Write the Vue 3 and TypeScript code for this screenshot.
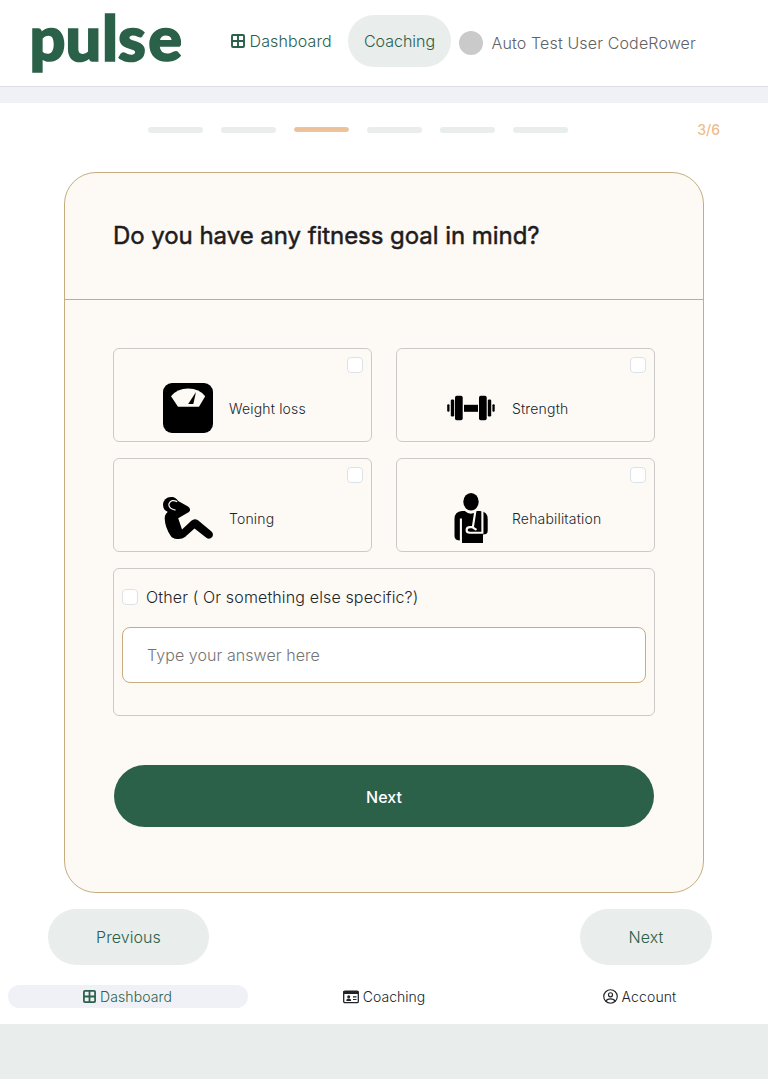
<script setup lang="ts">
import { ref } from 'vue'

type Goal = { id: string; label: string }

const goals: Goal[] = [
  { id: 'weight', label: 'Weight loss' },
  { id: 'strength', label: 'Strength' },
  { id: 'toning', label: 'Toning' },
  { id: 'rehab', label: 'Rehabilitation' },
]
const totalSteps = 6
const step = 3
const selected = ref<string[]>([])
const answer = ref('')
</script>

<template>
  <div class="page">
    <header class="header">
      <svg class="logo" width="152" height="64" viewBox="0 0 152 64">
        <text class="wordmark" y="48" x="-2.4 33.5 70 86 116.3">pulse</text>
      </svg>
      <nav class="topnav">
        <a class="toplink dash">
          <svg class="grid-icon" viewBox="0 0 14 14"><rect x="1" y="1" width="12" height="12" rx="1" /><path d="M7 1v12M1 7h12" /></svg>
          <span>Dashboard</span>
        </a>
        <a class="toplink pill">Coaching</a>
      </nav>
      <div class="user"><span class="avatar"></span><span class="username">Auto Test User CodeRower</span></div>
    </header>
    <div class="band"></div>

    <div class="progress">
      <div class="steps">
        <span v-for="n in totalSteps" :key="n" class="step" :class="{ active: n === step }"></span>
      </div>
      <span class="count">{{ step }}/{{ totalSteps }}</span>
    </div>

    <main class="card">
      <div class="card-head"><h1>Do you have any fitness goal in mind?</h1></div>
      <div class="card-body">
        <div class="goals">
          <label v-for="g in goals" :key="g.id" class="goal">
            <input v-model="selected" type="checkbox" class="check corner" :value="g.id" />
            <svg v-if="g.id === 'weight'" class="art" viewBox="0 0 50 50">
              <rect width="50" height="50" rx="9" />
              <path class="cut" d="M8 13.3Q14 5.5 25.2 5.5T42.2 13.3L36 23.7H15Z" />
              <path d="M33 9L30.3 21H25.2Z" />
            </svg>
            <svg v-else-if="g.id === 'strength'" class="art" viewBox="0 0 50 50">
              <rect x="1.2" y="21.3" width="2.3" height="7.4" rx="1" /><rect x="4.8" y="16.5" width="3.4" height="17" rx="1.2" />
              <rect x="9" y="12.8" width="7.7" height="24.4" rx="1.7" /><rect x="18" y="21.8" width="14" height="7" />
              <rect x="33" y="12.8" width="7.7" height="24.4" rx="1.7" /><rect x="41.8" y="16.5" width="3.4" height="17" rx="1.2" />
              <rect x="46.4" y="21.3" width="2.3" height="7.4" rx="1" />
            </svg>
            <svg v-else-if="g.id === 'toning'" class="art" viewBox="0 0 50 50">
              <circle cx="7.8" cy="11.8" r="7.8" />
              <path d="M8 4Q12 3.7 15.2 8L25 13.5Q28.5 16.2 26 19L15.2 25.2L19 36.5L28.3 27.8Q31.5 24.8 35 27.3L48.5 38.6Q51 41 49.2 44Q46.5 47.2 43.3 44.8L31.5 35.4L22 44Q19 46.5 14 46Q9.5 45.7 7.8 43Q2 34.5 1.7 25.5Q1.5 20.5 7 17.5Z" />
              <path class="line thin" d="M14.2 8.6Q8 5.7 6 10.7Q5 15.5 12.5 17.2" />
            </svg>
            <svg v-else class="art" viewBox="0 0 50 50">
              <ellipse cx="25" cy="8.8" rx="7.7" ry="8.8" />
              <path d="M16 18H18.8Q24.8 23.3 31.2 18H34Q41.7 18.5 41.7 26V38Q41.7 41.5 37 41.5V50H16V47.5Q8.5 48 8.5 43V26Q8.5 18.5 16 18Z" />
              <path class="line" d="M14.9 25.5V50M29.3 18.5L26.8 34.5M36.4 18V39.8H24Q20.6 39.8 20.6 37Q20.6 34.3 24 34.1H26.2L30.5 36.9" />
            </svg>
            <span class="goal-label">{{ g.label }}</span>
          </label>
        </div>
        <div class="other">
          <label class="other-row">
            <input v-model="selected" type="checkbox" class="check" value="other" />
            <span class="other-text">Other ( Or something else specific?)</span>
          </label>
          <input v-model="answer" class="answer" type="text" placeholder="Type your answer here" />
        </div>
        <button class="submit">Next</button>
      </div>
    </main>

    <div class="pager">
      <button class="soft prev">Previous</button>
      <button class="soft next">Next</button>
    </div>

    <nav class="bottomnav">
      <a class="tab on">
        <svg class="grid-icon" viewBox="0 0 14 14"><rect x="1" y="1" width="12" height="12" rx="1" /><path d="M7 1v12M1 7h12" /></svg>
        <span>Dashboard</span>
      </a>
      <a class="tab">
        <svg class="id-icon" viewBox="0 0 16 14">
          <rect x=".7" y="1.2" width="14.6" height="11.4" rx="1.2" fill="none" stroke="currentColor" stroke-width="1.3" />
          <path d="M.5 1h15v3H.5zM3.2 11Q3.2 8.6 5.7 8.6T8.2 11Z" /><circle cx="5.7" cy="6.8" r="1.5" />
          <path d="M10 6.3h3.5v1.1H10zM10 9h3.5v1.1H10z" />
        </svg>
        <span>Coaching</span>
      </a>
      <a class="tab">
        <svg class="user-icon" viewBox="0 0 14 14"><circle cx="7" cy="7" r="6.3" /><circle cx="7" cy="5.4" r="1.9" /><path d="M2.8 11.5Q3.5 9.2 7 9.2T11.2 11.5" /></svg>
        <span>Account</span>
      </a>
    </nav>
    <footer class="foot"></footer>
  </div>
</template>

<style>
body { margin: 0; background: #fff; }
</style>

<style scoped>
* { box-sizing: border-box; }
.page { width: 768px; height: 1079px; display: flex; flex-direction: column; font-family: Inter, "Liberation Sans", sans-serif; font-weight: 300; font-size: 16px; line-height: 24px; color: #212529; background: #fff; overflow: hidden; }
.header { flex: none; height: 87px; border-bottom: 1px solid #dcdfe6; display: flex; align-items: flex-start; padding-left: 32px; }
.logo { margin-top: 13px; overflow: visible; flex: none; }
.wordmark { font-family: Lato, sans-serif; font-weight: 900; font-size: 63px; fill: #2b6049; stroke: #2b6049; stroke-width: 1.7px; }
.topnav { display: flex; margin: 15px 0 0 47px; }
.toplink { color: #2b6049; height: 52px; display: flex; align-items: center; white-space: nowrap; }
.dash { width: 117px; gap: 4.5px; letter-spacing: .12px; }
.pill { width: 103px; justify-content: center; border-radius: 26px; background: #e9edeb; }
.grid-icon { width: 14px; height: 14px; flex: none; fill: none; stroke: currentColor; stroke-width: 1.9; }
.user { display: flex; align-items: center; gap: 8.5px; margin: 31px 0 0 8px; height: 24px; white-space: nowrap; }
.avatar { width: 24px; height: 24px; border-radius: 50%; background: #cacaca; }
.username { color: #626262; letter-spacing: .14px; }
.band { flex: none; height: 16px; background: #f0f1f6; }
.progress { flex: none; height: 69px; display: flex; padding: 16px 48px 0 148px; justify-content: space-between; }
.steps { display: flex; gap: 18px; padding-top: 8px; }
.step { width: 55px; height: 6px; border-radius: 3px; background: #e9edeb; }
.step.active { height: 5px; background: #edc298; border: 1px solid #e4c7a8; }
.count { color: #edbd8f; font-size: 14px; font-weight: 500; line-height: 22px; }
.card { flex: none; width: 640px; height: 721px; margin: 0 64px; border: 1px solid #c5ad80; border-radius: 32px; background: #fdfaf6; }
.card-head { height: 127px; border-bottom: 1px solid #c5ad80; padding: 47px 48px 0; }
h1 { margin: 0; font-size: 24px; line-height: 32px; font-weight: 400; letter-spacing: -.05px; -webkit-text-stroke: .5px #1f1c1c; color: #1f1c1c; white-space: nowrap; }
.card-body { padding: 48px; }
.goals { display: grid; grid-template-columns: 1fr 1fr; gap: 16px 24px; }
.goal { height: 94px; border: 1px solid #cccac8; border-radius: 6px; position: relative; display: flex; align-items: flex-start; padding: 34px 0 0 49px; gap: 16px; }
.art { width: 50px; height: 50px; flex: none; fill: #000; }
.cut { fill: #fdfaf6; }
.line { fill: none; stroke: #fdfaf6; stroke-width: 2.1; }
.thin { stroke-width: 1.2; }
.goal-label { font-size: 14px; line-height: 20px; margin-top: 16px; white-space: nowrap; letter-spacing: .17px; }
.check { appearance: none; width: 16px; height: 16px; margin: 0; border: 1px solid #dde1e8; border-radius: 4px; background: #fff; flex: none; }
.corner { position: absolute; right: 8px; top: 8px; }
.other { height: 148px; margin-top: 16px; border: 1px solid #cccac8; border-radius: 6px; padding: 16px 8px 0; }
.other-row { display: flex; align-items: center; gap: 8px; height: 24px; }
.other-text { letter-spacing: .14px; }
.answer { display: block; width: 100%; height: 56px; margin-top: 18px; border: 1px solid #c5ad80; border-radius: 8px; padding: 0 24px; background: #fff; font: inherit; color: inherit; letter-spacing: .07px; }
.answer::placeholder { color: #757575; opacity: 1; }
.submit { display: block; width: 540px; height: 62px; margin: 49px 1px 0; padding: 2px 0 0; border: 0; border-radius: 31px; background: #2b6049; color: #fff; font: 500 16px/24px Inter, sans-serif; }
.pager { flex: none; display: flex; justify-content: space-between; padding: 16px 56px 0 48px; height: 92px; }
.soft { height: 56px; border: 0; border-radius: 28px; padding: 0; background: #e9edeb; color: #2b6049; font: inherit; letter-spacing: .06px; }
.prev { width: 161px; }
.next { width: 132px; }
.bottomnav { flex: none; height: 39px; display: flex; }
.tab { width: 240px; height: 23px; margin: 0 8px; border-radius: 12px; display: flex; align-items: center; justify-content: center; gap: 4px; font-size: 14px; line-height: 22px; }
.tab.on { color: #2b6049; background: #f0f1f6; }
.tab.on, .tab:last-child { letter-spacing: .12px; padding-right: 1px; }
.tab .grid-icon { width: 13px; height: 13px; }
.id-icon { width: 16px; height: 14px; fill: currentColor; }
.user-icon { width: 15px; height: 15px; fill: none; stroke: currentColor; stroke-width: 1.1; }
.foot { flex: 1; background: #e9edeb; }
</style>
